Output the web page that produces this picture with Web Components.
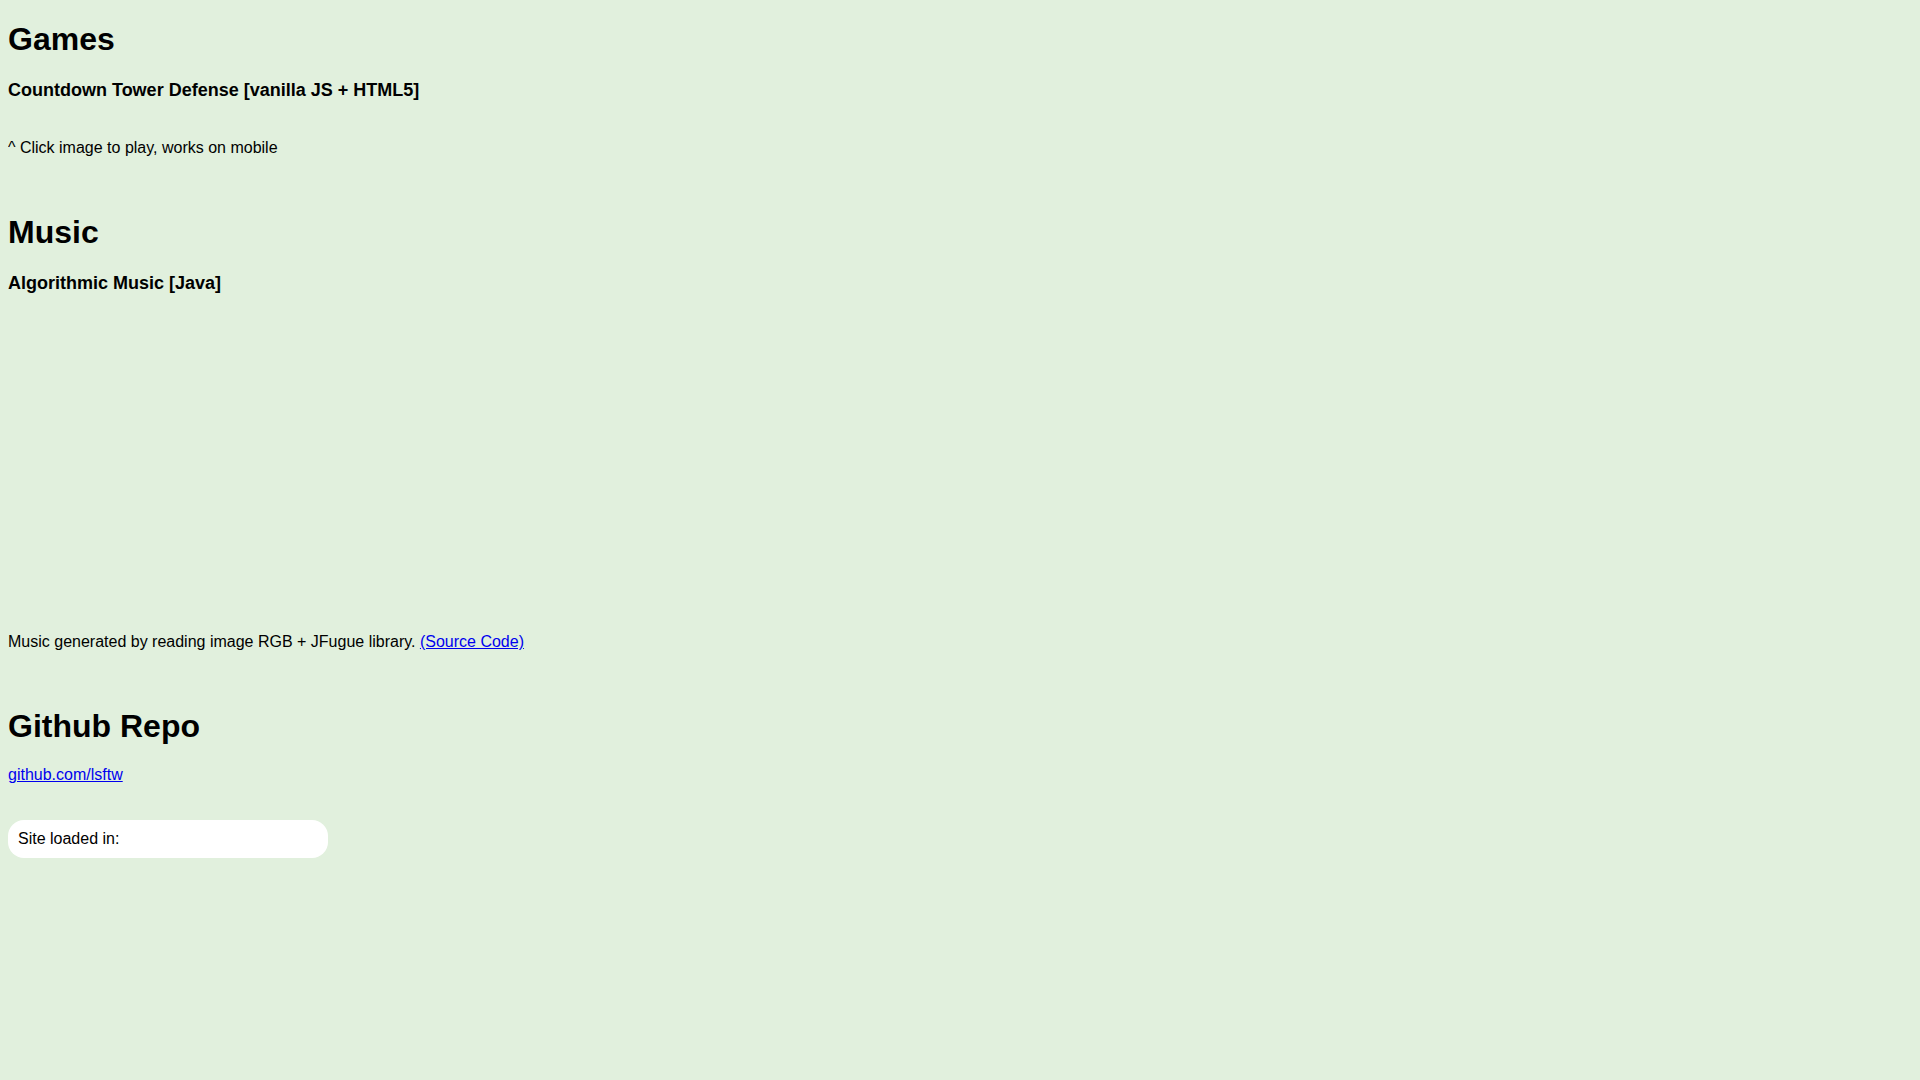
<!DOCTYPE html>
<html lang="en">
<head>
  <meta charset="utf-8">
  <meta name="viewport" content="width=device-width, initial-scale=1">
  <title>Games, Music, Github Repo</title>
  <style>
    body {
      margin: 0 8px;
      background: #e1f0dd;
      color: #000;
      font-family: "Liberation Sans", Arial, sans-serif;
      font-size: 16px;
      line-height: normal;
    }
  </style>
</head>
<body>
  <site-page>
    <page-section heading="Games">
      <project-item heading="Countdown Tower Defense [vanilla JS + HTML5]">
        <game-cover slot="media"></game-cover>
        ^ Click image to play, works on mobile
      </project-item>
    </page-section>

    <page-section heading="Music">
      <project-item heading="Algorithmic Music [Java]">
        <video-frame slot="media"></video-frame>
        Music generated by reading image RGB + JFugue library.
        <a href="https://github.com/lsftw">(Source Code)</a>
      </project-item>
    </page-section>

    <page-section heading="Github Repo">
      <a href="https://github.com/lsftw">github.com/lsftw</a>
    </page-section>

    <load-time></load-time>
  </site-page>

  <script>
    // Stacks the sections of the page
    class SitePage extends HTMLElement {
      constructor() {
        super();
        this.attachShadow({ mode: "open" });
      }
      connectedCallback() {
        this.shadowRoot.innerHTML = `
          <style>
            :host {
              display: flex;
              flex-direction: column;
              gap: 36px;
            }
          </style>
          <slot></slot>
        `;
      }
    }

    // Big heading with its content below
    class PageSection extends HTMLElement {
      constructor() {
        super();
        this.attachShadow({ mode: "open" });
      }
      connectedCallback() {
        this.shadowRoot.innerHTML = `
          <style>
            :host {
              display: block;
            }
            h1 {
              margin: 0;
              padding: 21px 0;
              font-size: 32px;
              line-height: 37px;
            }
          </style>
          <h1>${this.getAttribute("heading")}</h1>
          <slot></slot>
        `;
      }
    }

    // One project: title, image or video, then the description
    class ProjectItem extends HTMLElement {
      constructor() {
        super();
        this.attachShadow({ mode: "open" });
      }
      connectedCallback() {
        this.shadowRoot.innerHTML = `
          <style>
            :host {
              display: block;
            }
            h3 {
              margin: 0 0 19px;
              font-size: 18px;
              line-height: 23px;
            }
          </style>
          <h3>${this.getAttribute("heading")}</h3>
          <slot name="media"></slot>
          <div><slot></slot></div>
        `;
      }
    }

    // Empty line where the game image goes
    class GameCover extends HTMLElement {
      constructor() {
        super();
        this.attachShadow({ mode: "open" });
        this.shadowRoot.innerHTML = `
          <style>
            :host {
              display: block;
              height: 18px;
            }
          </style>
        `;
      }
    }

    // Keeps the room of the embedded video
    class VideoFrame extends HTMLElement {
      constructor() {
        super();
        this.attachShadow({ mode: "open" });
        this.shadowRoot.innerHTML = `
          <style>
            :host {
              display: block;
              max-width: 560px;
              padding-bottom: 4px;
            }
            div {
              aspect-ratio: 16 / 9;
            }
          </style>
          <div></div>
        `;
      }
    }

    class LoadTime extends HTMLElement {
      constructor() {
        super();
        this.attachShadow({ mode: "open" });
      }
      connectedCallback() {
        this.shadowRoot.innerHTML = `
          <style>
            :host {
              display: block;
              box-sizing: border-box;
              width: 320px;
              max-width: 100%;
              padding: 10px;
              border-radius: 16px;
              background: #fff;
            }
          </style>
          Site loaded in: <slot></slot>
        `;
      }
    }

    customElements.define("site-page", SitePage);
    customElements.define("page-section", PageSection);
    customElements.define("project-item", ProjectItem);
    customElements.define("game-cover", GameCover);
    customElements.define("video-frame", VideoFrame);
    customElements.define("load-time", LoadTime);
  </script>
</body>
</html>
